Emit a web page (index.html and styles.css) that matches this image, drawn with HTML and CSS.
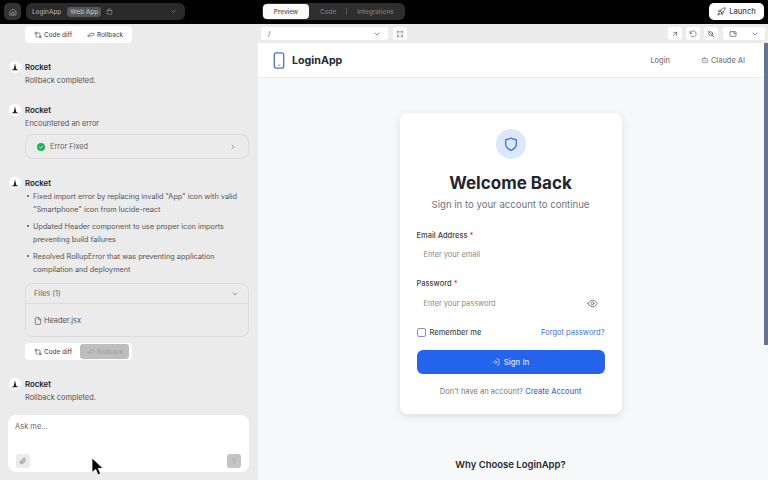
FILE: index.html
```html
<!DOCTYPE html>
<html lang="en">
<head>
<meta charset="utf-8">
<title>LoginApp</title>
<link rel="stylesheet" href="styles.css">
</head>
<body>
<div class="app">
  <header class="topbar">
    <button class="home-btn"><svg class="ic" viewBox="0 0 24 24"><path d="M3 10.500 12 3l9 7.500V21H3z"/><path d="M9 21v-8h6v8"/></svg></button>
    <div class="project">
      <span class="project-name">LoginApp</span>
      <span class="project-tag">Web App</span>
      <svg class="ic ic-lock" viewBox="0 0 24 24"><rect x="4" y="8" width="16" height="13" rx="2"/><path d="M8 8V5a2 2 0 0 1 2-2h4a2 2 0 0 1 2 2v3"/></svg>
      <svg class="ic ic-chev" viewBox="0 0 24 24"><path d="m6 9 6 6 6-6"/></svg>
    </div>
    <nav class="tabs">
      <span class="tab tab-active">Preview</span>
      <span class="tab">Code</span>
      <span class="tab-sep"></span>
      <span class="tab">Integrations</span>
    </nav>
    <button class="launch"><svg class="ic" viewBox="0 0 24 24"><path d="M4.500 16.500c-1.500 1.300-2 5-2 5s3.700-.5 5-2c.7-.8.7-2.100-.1-2.900a2.200 2.200 0 0 0-2.900-.1z"/><path d="m12 15-3-3a22 22 0 0 1 2-3.900A12.900 12.900 0 0 1 22 2c0 2.700-.8 7.500-6 11a22 22 0 0 1-4 2z"/><path d="M9 12H4s.5-3 2-4c1.600-1.100 5 0 5 0"/><path d="M12 15v5s3-.5 4-2c1.100-1.600 0-5 0-5"/></svg>Launch</button>
  </header>

  <div class="main">
    <aside class="chat">
      <div class="feed">
        <div class="actions">
          <span class="action"><svg class="ic" viewBox="0 0 24 24"><circle cx="18" cy="18" r="3"/><circle cx="6" cy="6" r="3"/><path d="M13 6h3a2 2 0 0 1 2 2v7"/><path d="M11 18H8a2 2 0 0 1-2-2V9"/></svg>Code diff</span>
          <span class="action"><svg class="ic" viewBox="0 0 24 24"><path d="m8 9-5 5 5 5"/><path d="M3 14h14a4 4 0 0 0 4-4V7H9"/></svg>Rollback</span>
        </div>

        <article class="msg msg-first">
          <div class="msg-head"><span class="avatar"><svg viewBox="0 0 12 12"><path d="M6 1.500 7.500 8.500 10.500 10h-9l3-1.500z"/></svg></span><span class="author">Rocket</span></div>
          <p class="msg-text">Rollback completed.</p>
        </article>

        <article class="msg msg-b">
          <div class="msg-head"><span class="avatar"><svg viewBox="0 0 12 12"><path d="M6 1.500 7.500 8.500 10.500 10h-9l3-1.500z"/></svg></span><span class="author">Rocket</span></div>
          <p class="msg-text">Encountered an error</p>
          <div class="status-card">
            <span class="status-dot"><svg viewBox="0 0 12 12"><path d="m3.500 6 1.800 1.800L8.500 4.500"/></svg></span>
            <span class="status-label">Error Fixed</span>
            <svg class="ic ic-right" viewBox="0 0 24 24"><path d="m9 6 6 6-6 6"/></svg>
          </div>
        </article>

        <article class="msg msg-c">
          <div class="msg-head"><span class="avatar"><svg viewBox="0 0 12 12"><path d="M6 1.500 7.500 8.500 10.500 10h-9l3-1.500z"/></svg></span><span class="author">Rocket</span></div>
          <ul class="bullets">
            <li>Fixed import error by replacing invalid "App" icon with valid "Smartphone" icon from lucide-react</li>
            <li>Updated Header component to use proper icon imports preventing build failures</li>
            <li>Resolved RollupError that was preventing application compilation and deployment</li>
          </ul>
          <div class="files">
            <div class="files-head"><span>Files (1)</span><svg class="ic ic-down" viewBox="0 0 24 24"><path d="m6 9 6 6 6-6"/></svg></div>
            <div class="files-body"><svg class="ic" viewBox="0 0 24 24"><path d="M14 2H6a2 2 0 0 0-2 2v16a2 2 0 0 0 2 2h12a2 2 0 0 0 2-2V8z"/><path d="M14 2v6h6"/></svg>Header.jsx</div>
          </div>
          <div class="actions actions-mid">
            <span class="action"><svg class="ic" viewBox="0 0 24 24"><circle cx="18" cy="18" r="3"/><circle cx="6" cy="6" r="3"/><path d="M13 6h3a2 2 0 0 1 2 2v7"/><path d="M11 18H8a2 2 0 0 1-2-2V9"/></svg>Code diff</span>
            <span class="action action-off"><svg class="ic" viewBox="0 0 24 24"><path d="m8 9-5 5 5 5"/><path d="M3 14h14a4 4 0 0 0 4-4V7H9"/></svg>Rollback</span>
          </div>
        </article>

        <article class="msg msg-d">
          <div class="msg-head"><span class="avatar"><svg viewBox="0 0 12 12"><path d="M6 1.500 7.500 8.500 10.500 10h-9l3-1.500z"/></svg></span><span class="author">Rocket</span></div>
          <p class="msg-text">Rollback completed.</p>
        </article>
      </div>

      <div class="composer">
        <div class="composer-ph">Ask me...</div>
        <div class="composer-tools">
          <span class="tool"><svg class="ic" viewBox="0 0 24 24"><path d="m20 11-8.500 8.500a5 5 0 0 1-7-7L13 4a3.300 3.300 0 0 1 4.700 4.700l-8.500 8.500a1.700 1.700 0 0 1-2.400-2.400L15 7.500"/></svg></span>
          <span class="tool tool-send"><svg class="ic" viewBox="0 0 24 24"><path d="M12 20V5"/><path d="m6 11 6-6 6 6"/></svg></span>
        </div>
      </div>
    </aside>

    <section class="workspace">
      <div class="toolbar">
        <div class="url"><span>/</span><svg class="ic" viewBox="0 0 24 24"><path d="m6 9 6 6 6-6"/></svg></div>
        <span class="tbtn"><svg class="ic" viewBox="0 0 24 24"><path d="M4 9V4h5M20 9V4h-5M4 15v5h5M20 15v5h-5" transform="rotate(180 12 12)"/><path d="M9 9h.01M15 9h.01M9 15h.01M15 15h.01"/></svg></span>
        <div class="toolbar-right">
          <span class="tbtn"><svg class="ic" viewBox="0 0 24 24"><path d="M7 17 17 7"/><path d="M8 7h9v9"/></svg></span>
          <span class="tbtn"><svg class="ic" viewBox="0 0 24 24"><path d="M3 4v6h6"/><path d="M3.500 10A9 9 0 1 1 6 18"/></svg></span>
          <span class="tbtn"><svg class="ic" viewBox="0 0 24 24"><circle cx="11" cy="11" r="6"/><path d="m16 16 5 5M3 3l18 18"/></svg></span>
          <span class="tbtn tbtn-wide"><svg class="ic" viewBox="0 0 24 24"><rect x="3" y="5" width="18" height="14" rx="2"/><path d="M15 5v6h6"/></svg><svg class="ic" viewBox="0 0 24 24"><path d="m6 9 6 6 6-6"/></svg></span>
        </div>
      </div>

      <div class="preview">
        <header class="site-head">
          <div class="brand"><svg class="brand-ic" viewBox="0 0 12 18"><rect x="1" y="1" width="10" height="16" rx="2"/><path d="M6 14h.01"/></svg><span>LoginApp</span></div>
          <nav class="site-nav">
            <span>Login</span>
            <span class="site-claude"><svg class="ic" viewBox="0 0 24 24"><rect x="4" y="8" width="16" height="12" rx="2"/><path d="M12 8V4H9M9 13v2M15 13v2"/></svg>Claude AI</span>
          </nav>
        </header>
        <div class="site-body">
          <div class="card">
            <div class="shield"><svg viewBox="0 0 24 24"><path d="M12 3c2 1.500 4.500 2.200 8 2.500V12c0 4.500-3 7.500-8 9.500-5-2-8-5-8-9.500V5.500c3.500-.3 6-1 8-2.500z"/></svg></div>
            <h1 class="card-title">Welcome Back</h1>
            <p class="card-sub">Sign in to your account to continue</p>
            <label class="field-label">Email Address <em>*</em></label>
            <div class="field">Enter your email</div>
            <label class="field-label field-label-2">Password <em>*</em></label>
            <div class="field field-pw"><span>Enter your password</span><svg class="ic" viewBox="0 0 24 24"><path d="M2 12s3.500-7 10-7 10 7 10 7-3.500 7-10 7-10-7-10-7z"/><circle cx="12" cy="12" r="3"/></svg></div>
            <div class="row">
              <span class="remember"><span class="check"></span>Remember me</span>
              <a class="link">Forgot password?</a>
            </div>
            <button class="submit"><svg class="ic" viewBox="0 0 24 24"><path d="M15 3h4a2 2 0 0 1 2 2v14a2 2 0 0 1-2 2h-4"/><path d="m10 17 5-5-5-5"/><path d="M15 12H3"/></svg>Sign In</button>
            <p class="signup">Don't have an account? <a class="link link-strong">Create Account</a></p>
          </div>
          <h2 class="why">Why Choose LoginApp?</h2>
        </div>
        <div class="scrollbar"></div>
      </div>
    </section>
  </div>

  <svg class="cursor" viewBox="0 0 14 22"><path d="M1 1v16l4-3.500 2.500 6 2.800-1.200-2.500-5.800H13z"/></svg>
</div>
</body>
</html>
```

FILE: styles.css
```css
* { box-sizing: border-box; }
html, body { margin: 0; height: 100%; }
body { background: #000; font-family: Inter, "Liberation Sans", sans-serif; overflow: hidden; }
p, h1, h2, ul { margin: 0; padding: 0; }
button { font: inherit; border: 0; padding: 0; }
.ic { fill: none; stroke: currentColor; stroke-width: 2; stroke-linecap: round; stroke-linejoin: round; width: 8px; height: 8px; flex: none; }

.app { position: relative; width: 768px; height: 480px; display: flex; flex-direction: column; overflow: hidden; }

.topbar { height: 24px; flex: none; background: #020202; display: flex; align-items: flex-start; padding: 3px 4px 0 4px; }
.home-btn { width: 17px; height: 17px; border-radius: 5px; background: #333; color: #aaa; display: flex; align-items: center; justify-content: center; }
.project { width: 159px; height: 17px; margin-left: 5px; border-radius: 6px; background: #2a2a2a; display: flex; align-items: center; padding: 0 8px 0 6px; color: #a8a8a8; font-size: 6.400px; font-weight: 500; }
.project-tag { margin-left: 6px; background: #565656; color: #bbb; border-radius: 3px; padding: 1px 3px; }
.ic-lock { margin-left: 5px; width: 7px; height: 7px; }
.ic-chev { margin-left: auto; width: 7px; height: 7px; }
.tabs { margin-left: 77px; width: 143px; height: 17px; border-radius: 6px; background: #2e2e2e; display: flex; align-items: center; color: #7e7e7e; font-size: 6.400px; font-weight: 500; }
.tab-active { width: 46px; height: 15px; margin-left: 1px; border-radius: 4px; background: #fafafa; color: #555; display: flex; align-items: center; justify-content: center; }
.tab:nth-child(2) { margin-left: 11px; }
.tab-sep { width: 1px; height: 7px; background: #555; margin: 0 10px; }
.launch { margin-left: auto; width: 55px; height: 17px; border-radius: 5px; background: #fff; color: #444; font-size: 7.600px; font-weight: 500; display: flex; align-items: center; justify-content: center; gap: 3px; }
.launch .ic { width: 9px; height: 9px; }

.main { flex: 1; display: flex; min-height: 0; }

.chat { width: 258px; flex: none; background: #ebebeb; display: flex; flex-direction: column; padding: 2px 8px 8px 8px; position: relative; }
.feed { flex: 1; min-height: 0; }

.actions { margin-left: 17px; display: flex; width: 107px; align-items: center; height: 17px; background: #fff; border-radius: 4px; font-size: 6.400px; font-weight: 500; color: #555; padding: 1px; white-space: nowrap; }
.action { height: 15px; display: flex; align-items: center; gap: 2px; padding: 0 7px 0 8px; border-radius: 3px; }
.action-off { background: #bebebe; color: #a5a5a5; margin-left: 1px; padding: 0 6px 0 7px; }
.actions-mid { margin-top: 6px; }

.msg-head { display: flex; align-items: center; height: 12px; gap: 4px; }
.avatar { width: 12px; height: 12px; background: #fff; border-radius: 50%; display: flex; align-items: center; justify-content: center; margin-left: 1px; }
.avatar svg { width: 10px; height: 10px; fill: #222; }
.author { font-size: 7.800px; font-weight: 600; color: #222; }
.msg-text { margin: 2px 0 0 17px; font-size: 7.400px; line-height: 12px; color: #555; }
.msg-first { margin-top: 18px; }
.msg-b { margin-top: 17px; }
.msg-c { margin-top: 18px; }
.msg-d { margin-top: 18px; }

.status-card { margin: 4px 0 0 17px; height: 25px; width: 224px; border: 1px solid #dcdcdc; border-radius: 8px; display: flex; align-items: center; padding: 0 11px; font-size: 7.400px; color: #666; }
.status-dot { width: 8px; height: 8px; background: #1fb35c; border-radius: 50%; display: flex; }
.status-dot svg { fill: none; stroke: #e6f5ea; stroke-width: 1.400; width: 8px; height: 8px; }
.status-label { margin-left: 5px; }
.ic-right { margin-left: auto; color: #777; }

.bullets { list-style: none; margin: 1px 0 0 25px; width: 218px; font-size: 7.300px; line-height: 13px; color: #555; }
.bullets li { position: relative; margin-bottom: 4px; }
.bullets li::before { content: ""; position: absolute; left: -6px; top: 5px; width: 2px; height: 2px; background: #555; border-radius: 50%; }

.files { margin: 7px 0 0 17px; width: 224px; height: 54px; border: 1px solid #dcdcdc; border-radius: 8px; font-size: 7.400px; color: #666; }
.files-head { height: 20px; border-bottom: 1px solid #dcdcdc; display: flex; align-items: center; justify-content: space-between; padding: 0 9px 0 8px; }
.files-body { margin: 12px 0 0 8px; display: flex; align-items: center; gap: 2px; color: #555; }

.composer { position: relative; flex: none; height: 57px; width: 241px; background: #fff; border-radius: 8px; padding: 7px; font-size: 7.500px; color: #666; display: flex; flex-direction: column; justify-content: space-between; }
.composer-tools { display: flex; justify-content: space-between; padding: 0 1px 0 1px; margin-bottom: -3px; }
.tool { width: 14px; height: 14px; background: #ebebeb; border-radius: 3px; color: #777; display: flex; align-items: center; justify-content: center; }
.tool-send { background: #c4c4c4; color: #aaa; }

.workspace { flex: 1; display: flex; flex-direction: column; min-width: 0; }
.toolbar { height: 19px; flex: none; background: #ececec; display: flex; align-items: center; padding: 0 3px 0 3px; gap: 5px; color: #555; }
.url { width: 127px; height: 13px; background: #fff; border-radius: 3px; display: flex; align-items: center; justify-content: space-between; padding: 0 7px; font-size: 7px; }
.toolbar-right { margin-left: auto; display: flex; gap: 4px; }
.tbtn { width: 14px; height: 13px; background: #fff; border-radius: 3px; display: flex; align-items: center; justify-content: center; }
.tbtn-wide { width: 42px; justify-content: space-between; padding: 0 6px; margin-left: 1px; }

.preview { flex: 1; position: relative; display: flex; flex-direction: column; background: #f7f8fa; min-height: 0; }
.site-head { height: 35px; flex: none; background: #fff; border-bottom: 1px solid #ececec; display: flex; align-items: center; justify-content: space-between; padding: 0 23px 0 15px; }
.brand { display: flex; align-items: center; gap: 7px; font-size: 10.700px; font-weight: 700; color: #252a33; }
.brand-ic { width: 12px; height: 17px; fill: none; stroke: #4a74d4; stroke-width: 1.400; stroke-linecap: round; }
.site-nav { display: flex; gap: 31px; font-size: 7.400px; font-weight: 500; color: #7d7d7d; }
.site-claude { display: flex; align-items: center; gap: 2px; }

.site-body { display: flex; flex-direction: column; align-items: center; padding-right: 5px; }
.card { margin-top: 35px; width: 222px; height: 301px; background: #fff; border-radius: 8px; box-shadow: 0 3px 9px rgba(40, 50, 70, .12); padding: 16px 17px 0; display: flex; flex-direction: column; }
.shield { align-self: center; width: 30px; height: 30px; border-radius: 50%; background: #dbe7fa; display: flex; align-items: center; justify-content: center; }
.shield svg { width: 16px; height: 16px; fill: none; stroke: #3d72dd; stroke-width: 2; stroke-linejoin: round; }
.card-title { margin-top: 14px; text-align: center; font-size: 17px; line-height: 21px; font-weight: 700; color: #22262e; }
.card-sub { margin-top: 4px; text-align: center; font-size: 9.600px; line-height: 14px; color: #6f737a; }
.field-label { display: block; margin-top: 19px; font-size: 7.500px; line-height: 10px; font-weight: 500; color: #3c3f45; }
.field-label em { color: #d33; font-style: normal; }
.field-label-2 { margin-top: 14px; }
.field { margin-top: 2px; height: 22px; display: flex; align-items: center; padding: 0 7px; font-size: 7.400px; color: #888; }
.field-pw { margin-top: 3px; justify-content: space-between; }
.field-pw .ic { width: 11px; height: 11px; color: #666; stroke-width: 1.800; }
.row { margin-top: 14px; display: flex; align-items: center; justify-content: space-between; font-size: 7.500px; }
.remember { display: flex; align-items: center; gap: 4px; font-weight: 500; color: #4a4d55; }
.check { width: 9px; height: 9px; border: 1px solid #7f95c8; border-radius: 2px; background: #fff; }
.link { color: #3f71d8; }
.link-strong { font-weight: 500; }
.submit { margin-top: 13px; height: 24px; width: 188px; background: #2463eb; color: #dfe8fb; border-radius: 6px; display: flex; align-items: center; justify-content: center; gap: 4px; font-size: 7.800px; font-weight: 500; }
.signup { margin-top: 13px; text-align: center; font-size: 7.500px; color: #777; }
.why { margin-top: 44px; font-size: 9.500px; line-height: 14px; font-weight: 600; color: #25282e; }
.scrollbar { position: absolute; right: 0; top: 0; width: 4px; height: 302px; background: #64748f; }

.cursor { position: absolute; left: 91px; top: 457px; width: 13px; height: 20px; fill: #000; stroke: #fff; stroke-width: .8; }
```
